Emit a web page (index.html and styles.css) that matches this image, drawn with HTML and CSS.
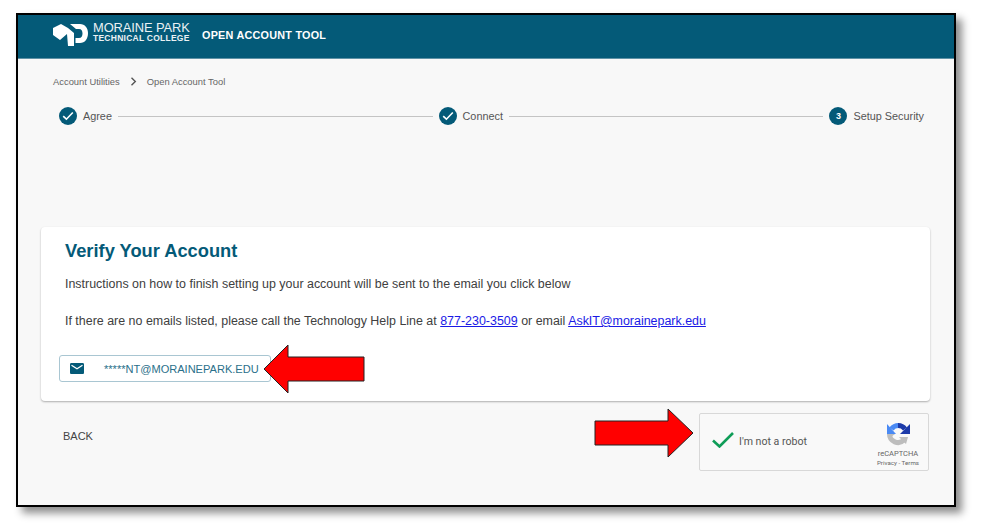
FILE: index.html
```html
<!DOCTYPE html>
<html lang="en">
<head>
<meta charset="utf-8">
<title>Open Account Tool</title>
<link rel="stylesheet" href="styles.css">
</head>
<body>
<div class="frame">
  <header class="topbar">
    <svg class="logo" width="36" height="23" viewBox="0 0 36 23" aria-hidden="true">
      <path fill="#fff" d="M0 5 8 1 15 5 21 10V23H15L14 11 7 17 0 12Z"/>
      <path fill="#fff" d="M17 1H27C32 1 35 5 35 10C35 16 32 20 27 20H22.500V15H26C28.500 15 29.500 13 29.500 10.500C29.500 8 28.500 6 26 6H23Z"/>
    </svg>
    <div class="brand">
      <span class="brand-top">MORAINE PARK</span>
      <span class="brand-sub">TECHNICAL COLLEGE</span>
    </div>
    <span class="tool-name">OPEN ACCOUNT TOOL</span>
  </header>
  <main class="content">
    <nav class="crumbs">
      <span>Account Utilities</span>
      <svg class="crumb-sep" width="7" height="9" viewBox="0 0 7 9" aria-hidden="true"><path d="M1.500.8 5.300 4.500 1.500 8.200" fill="none" stroke="#555" stroke-width="1.400"/></svg>
      <span>Open Account Tool</span>
    </nav>
    <div class="stepper">
      <div class="step">
        <span class="dot"><svg width="12" height="10" viewBox="0 0 12 10" aria-hidden="true"><path d="M1.200 5.200 4.400 8.200 10.800 1.500" fill="none" stroke="#fff" stroke-width="1.600"/></svg></span>
        <span>Agree</span>
      </div>
      <span class="line"></span>
      <div class="step">
        <span class="dot"><svg width="12" height="10" viewBox="0 0 12 10" aria-hidden="true"><path d="M1.200 5.200 4.400 8.200 10.800 1.500" fill="none" stroke="#fff" stroke-width="1.600"/></svg></span>
        <span>Connect</span>
      </div>
      <span class="line"></span>
      <div class="step">
        <span class="dot dot-num">3</span>
        <span>Setup Security</span>
      </div>
    </div>
    <section class="card">
      <h1 class="card-title">Verify Your Account</h1>
      <p class="card-text">Instructions on how to finish setting up your account will be sent to the email you click below</p>
      <p class="card-text help">If there are no emails listed, please call the Technology Help Line at <a href="#">877-230-3509</a> or email <a href="#">AskIT@morainepark.edu</a></p>
      <button class="email-btn" type="button">
        <svg width="14" height="11" viewBox="0 0 14 11" aria-hidden="true"><path fill="#045a78" d="M1.300 0H12.700C13.400 0 14 .6 14 1.300V9.700C14 10.400 13.400 11 12.700 11H1.300C.6 11 0 10.400 0 9.700V1.300C0 .6.600 0 1.300 0Z"/><path d="M1.500 2.200 7 5.800 12.500 2.200" fill="none" stroke="#fff" stroke-width="1.300"/></svg>
        <span>*****NT@MORAINEPARK.EDU</span>
      </button>
    </section>
    <div class="actions">
      <span class="back">BACK</span>
      <div class="captcha">
        <svg class="captcha-check" width="22" height="16" viewBox="0 0 22 16" aria-hidden="true"><path d="M1 8.500 7.500 14.500 21 1" fill="none" stroke="#0f9d58" stroke-width="2.600"/></svg>
        <span class="captcha-label">I'm not a robot</span>
        <div class="captcha-brand">
          <svg width="24" height="24" viewBox="0 0 24 24" aria-hidden="true">
            <path fill="none" stroke="#bdbdbd" stroke-width="5" d="M3.500 12A8.500 8.500 0 0 0 18 18"/>
            <path fill="#bdbdbd" d="M1 12H9L5 15ZM13 15H22L20 22Z"/>
            <path fill="none" stroke="#4a8af4" stroke-width="5" d="M12.500 3.500A8.500 8.500 0 0 0 5.500 7"/>
            <path fill="#4a8af4" d="M1 2 10 12H1Z"/>
            <path fill="none" stroke="#1c3aa9" stroke-width="5" d="M12 3.500A8.500 8.500 0 0 1 19 7"/>
            <path fill="#1c3aa9" d="M24 2V12H14Z"/>
          </svg>
          <span class="captcha-name">reCAPTCHA</span>
          <span class="captcha-links">Privacy - Terms</span>
        </div>
      </div>
    </div>
  </main>
  <svg class="arrow arrow-left" width="102" height="50" viewBox="0 0 102 50" aria-hidden="true"><path d="M1 25 25 1V13H101V37H25V49Z" fill="#f00" stroke="#222" stroke-width="1"/></svg>
  <svg class="arrow arrow-right" width="100" height="50" viewBox="0 0 100 50" aria-hidden="true"><path d="M99 25 74 1V13H1V37H74V49Z" fill="#f00" stroke="#222" stroke-width="1"/></svg>
</div>
</body>
</html>
```
FILE: styles.css
```css
* { box-sizing: border-box; }
html, body { margin: 0; height: 100%; background: #fff; overflow: hidden; }
body { padding: 13px 0 0 16px; font-family: "Liberation Sans", Arial, sans-serif; color: #3f3f3f; }
.frame {
  position: relative;
  width: 940px;
  height: 494px;
  border: 2px solid #000;
  background: #f8f8f8;
  box-shadow: 6px 6px 8px rgba(0,0,0,.45);
  display: flex;
  flex-direction: column;
}
.topbar {
  height: 44px;
  flex: none;
  background: #045a78;
  border-bottom: 1px solid #5f92a6;
  padding: 0 0 4px 35px;
  display: flex;
  align-items: center;
  color: #fff;
}
.logo { flex: none; margin-right: 4px; }
.brand { display: flex; flex-direction: column; width: 108px; color: #eaf1f4; margin: 0 1px 5px 0; }
.brand-top { font-size: 12.900px; line-height: 13px; white-space: nowrap; letter-spacing: -.1px; }
.brand-sub { font-size: 8.500px; line-height: 9px; font-weight: bold; white-space: nowrap; letter-spacing: .25px; }
.tool-name { font-size: 10.800px; font-weight: bold; letter-spacing: .25px; white-space: nowrap; }
.content { flex: 1; padding: 0 24px 0 23px; display: flex; flex-direction: column; }
.crumbs { margin: 16px 0 0 12px; height: 12px; display: flex; align-items: center; gap: 8px; font-size: 9.400px; color: #666; }
.crumb-sep { margin: 0 2px; }
.stepper { margin: 20px 6px 0 18px; height: 18px; display: flex; align-items: center; font-size: 10.850px; color: #555; }
.step { display: flex; align-items: center; gap: 6px; white-space: nowrap; }
.dot { width: 18px; height: 18px; border-radius: 50%; background: #045a78; color: #fff; display: flex; align-items: center; justify-content: center; }
.dot-num { font-size: 9px; font-weight: bold; }
.line { flex: 1; height: 1px; background: #c4c4c4; margin: 0 6px; }
.card {
  margin-top: 102px;
  height: 174px;
  background: #fff;
  border-radius: 4px;
  box-shadow: 0 1px 2px rgba(0,0,0,.3);
  padding: 13px 24px 0;
}
.card-title { margin: 0; font-size: 18.300px; line-height: 22px; font-weight: bold; color: #045a78; }
.card-text { margin: 15px 0 0; font-size: 12.450px; line-height: 14px; color: #404040; white-space: nowrap; }
.help { margin-top: 23px; }
.help a { color: #1a1ae6; }
.email-btn {
  margin: 27px 0 0 -6px;
  width: 212px;
  height: 27px;
  padding: 0 0 0 10px;
  display: flex;
  align-items: center;
  gap: 20px;
  background: #fff;
  border: 1px solid #a9c6d2;
  border-radius: 3px;
  font: 11.050px "Liberation Sans", Arial, sans-serif;
  color: #2a6f8a;
  white-space: nowrap;
}
.actions { margin-top: 12px; display: flex; justify-content: space-between; align-items: flex-start; }
.back { margin: 17px 0 0 22px; font-size: 11px; line-height: 13px; color: #444; }
.captcha {
  width: 230px;
  height: 58px;
  background: #f9f9f9;
  border: 1px solid #d8d8d8;
  border-radius: 2px;
  margin-right: 1px;
  display: flex;
  align-items: center;
  font-family: Roboto, "Liberation Sans", sans-serif;
}
.captcha-check { margin: 0 0 5px 12px; flex: none; }
.captcha-label { margin: 0 0 2px 5px; font-size: 10.600px; color: #555; flex: 1; }
.captcha-brand { width: 60px; display: flex; flex-direction: column; align-items: center; padding-top: 6px; }
.captcha-name { font-size: 7.500px; line-height: 9px; color: #666; margin-top: 3px; }
.captcha-links { font-size: 6.200px; line-height: 9px; color: #666; margin-top: 1px; white-space: nowrap; }
.arrow { position: absolute; }
.arrow-left { left: 245px; top: 329px; }
.arrow-right { left: 576px; top: 393px; }
```
